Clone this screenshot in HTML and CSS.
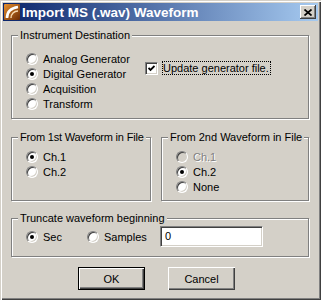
FILE: index.html
```html
<!DOCTYPE html>
<html lang="en">
<head>
    <meta charset="UTF-8">
    <title>Import MS (.wav) Waveform</title>
    <link rel="stylesheet" href="styles.css">
</head>
<body>
    <div class="window">
        <div class="titlebar">
            <svg class="app-icon" width="16" height="16" viewBox="0 0 16 16">
                <defs>
                    <linearGradient id="ico" x1="0" y1="0" x2="1" y2="1">
                        <stop offset="0" stop-color="#e8902e"/>
                        <stop offset="1" stop-color="#6a2a04"/>
                    </linearGradient>
                </defs>
                <rect x="0" y="0" width="16" height="16" rx="1" fill="url(#ico)"/>
                <path d="M3 14 C3 8 7 4 14 3" fill="none" stroke="#fff" stroke-width="2.6"/>
                <path d="M7 14 C7 10 10 7 14 7" fill="none" stroke="#f6d8b0" stroke-width="1.4"/>
            </svg>
            <span class="title">Import MS (.wav) Waveform</span>
            <button class="close-btn">
                <svg width="8" height="7" viewBox="0 0 8 7">
                    <path d="M0.5 0.5 L7.5 6.5 M7.5 0.5 L0.5 6.5" stroke="#000" stroke-width="1.7"/>
                </svg>
            </button>
        </div>

        <div class="content">
            <fieldset class="group dest">
                <legend>Instrument Destination</legend>
                <div class="dest-body">
                    <div class="radio-list">
                        <div class="radio-row"><span class="radio"></span>Analog Generator</div>
                        <div class="radio-row"><span class="radio checked"></span>Digital Generator</div>
                        <div class="radio-row"><span class="radio"></span>Acquisition</div>
                        <div class="radio-row"><span class="radio"></span>Transform</div>
                    </div>
                    <div class="check-row">
                        <span class="checkbox">
                            <svg width="7" height="7" viewBox="0 0 7 7">
                                <path d="M0.5 3 L2.5 5 L6.5 1" fill="none" stroke="#000" stroke-width="1.8"/>
                            </svg>
                        </span>
                        <span class="focus">Update generator file.</span>
                    </div>
                </div>
            </fieldset>

            <div class="wave-row">
                <fieldset class="group first">
                    <legend>From 1st Waveform in File</legend>
                    <div class="radio-row"><span class="radio checked"></span>Ch.1</div>
                    <div class="radio-row"><span class="radio"></span>Ch.2</div>
                </fieldset>
                <fieldset class="group second">
                    <legend>From 2nd Waveform in File</legend>
                    <div class="radio-row disabled"><span class="radio"></span>Ch.1</div>
                    <div class="radio-row"><span class="radio checked"></span>Ch.2</div>
                    <div class="radio-row"><span class="radio"></span>None</div>
                </fieldset>
            </div>

            <fieldset class="group truncate">
                <legend>Truncate waveform beginning</legend>
                <div class="trunc-body">
                    <div class="radio-row sec"><span class="radio checked"></span>Sec</div>
                    <div class="radio-row samples"><span class="radio"></span>Samples</div>
                    <div class="textbox">0</div>
                </div>
            </fieldset>

            <div class="buttons">
                <button class="btn default">OK</button>
                <button class="btn">Cancel</button>
            </div>
        </div>
    </div>
</body>
</html>
```

FILE: styles.css
```css
* {
    margin: 0;
    padding: 0;
    box-sizing: border-box;
}

body {
    font-family: 'Liberation Sans', Arial, sans-serif;
    font-size: 11px;
    color: #000;
    background: #d4d0c8;
}

.window {
    width: 321px;
    height: 300px;
    padding: 3px;
    background: #d4d0c8;
    display: flex;
    flex-direction: column;
    box-shadow: inset 1px 1px 0 #d4d0c8, inset 2px 2px 0 #fff,
                inset -1px -1px 0 #404040, inset -2px -2px 0 #808080;
}

.titlebar {
    height: 18px;
    display: flex;
    align-items: center;
    padding-right: 2px;
    background: linear-gradient(to right, #0a246a, #a6caf0);
}

.app-icon {
    margin-left: 1px;
}

.title {
    margin-left: 2px;
    color: #fff;
    font-weight: bold;
    font-size: 13.5px;
}

.close-btn {
    margin-left: auto;
    width: 16px;
    height: 14px;
    border: none;
    background: #d4d0c8;
    display: flex;
    align-items: center;
    justify-content: center;
    box-shadow: inset -1px -1px 0 #404040, inset 1px 1px 0 #fff, inset -2px -2px 0 #808080;
}

.content {
    flex: 1;
    padding: 8px 9px 0 8px;
}

.group {
    border: 1px solid #808080;
    box-shadow: inset 1px 1px 0 #fff, 1px 1px 0 #fff;
    min-width: 0;
}

.group legend {
    margin-left: 6px;
    padding: 0 2px;
    line-height: 13px;
    white-space: nowrap;
    background: #d4d0c8;
}

.first legend {
    letter-spacing: -0.2px;
}

.dest {
    padding: 9px 0 7px 0;
}

.dest-body {
    display: flex;
}

.radio-list {
    width: 133px;
}

.radio-row {
    display: flex;
    align-items: center;
    height: 15px;
    padding-left: 14px;
}

.radio {
    width: 12px;
    height: 12px;
    margin-right: 5px;
    border-radius: 50%;
    background: #fff;
    border: 1px solid;
    border-color: #808080 #fff #fff #808080;
    box-shadow: inset 1px 1px 0 #404040, inset -1px -1px 0 #d4d0c8;
    display: flex;
    align-items: center;
    justify-content: center;
    flex-shrink: 0;
}

.radio.checked::after {
    content: '';
    width: 4px;
    height: 4px;
    border-radius: 50%;
    background: #000;
}

.disabled {
    color: #808080;
    text-shadow: 1px 1px 0 #fff;
}

.disabled .radio {
    background: #d4d0c8;
}

.check-row {
    display: flex;
    align-items: center;
    height: 14px;
    margin-top: 10px;
}

.checkbox {
    width: 13px;
    height: 13px;
    background: #fff;
    border: 1px solid;
    border-color: #808080 #fff #fff #808080;
    box-shadow: inset 1px 1px 0 #404040, inset -1px -1px 0 #d4d0c8;
    display: flex;
    align-items: center;
    justify-content: center;
}

.focus {
    margin-left: 4px;
    padding-right: 1px;
    border: 1px dotted #000;
    line-height: 12px;
}

.wave-row {
    display: flex;
    gap: 10px;
    margin-top: 12px;
}

.first {
    width: 140px;
    padding: 5px 0 6px 0;
}

.second {
    flex: 1;
    padding: 5px 0 6px 0;
}

.truncate {
    margin-top: 11px;
    padding: 1px 0 9px 0;
}

.trunc-body {
    display: flex;
    align-items: center;
    height: 21px;
}

.sec {
    width: 75px;
}

.samples {
    width: 73px;
    padding-left: 0;
}

.textbox {
    width: 103px;
    height: 21px;
    background: #fff;
    padding: 3px 4px;
    border: 1px solid;
    border-color: #808080 #fff #fff #808080;
    box-shadow: inset 1px 1px 0 #404040, inset -1px -1px 0 #d4d0c8;
}

.buttons {
    display: flex;
    gap: 23px;
    margin-top: 10px;
    padding-left: 67px;
}

.btn {
    width: 67px;
    height: 23px;
    border: none;
    background: #d4d0c8;
    font-family: 'Liberation Sans', Arial, sans-serif;
    font-size: 11px;
    color: #000;
    box-shadow: inset 1px 1px 0 #fff, inset -1px -1px 0 #404040, inset -2px -2px 0 #808080;
}

.btn.default {
    border: 1px solid #000;
}
```
